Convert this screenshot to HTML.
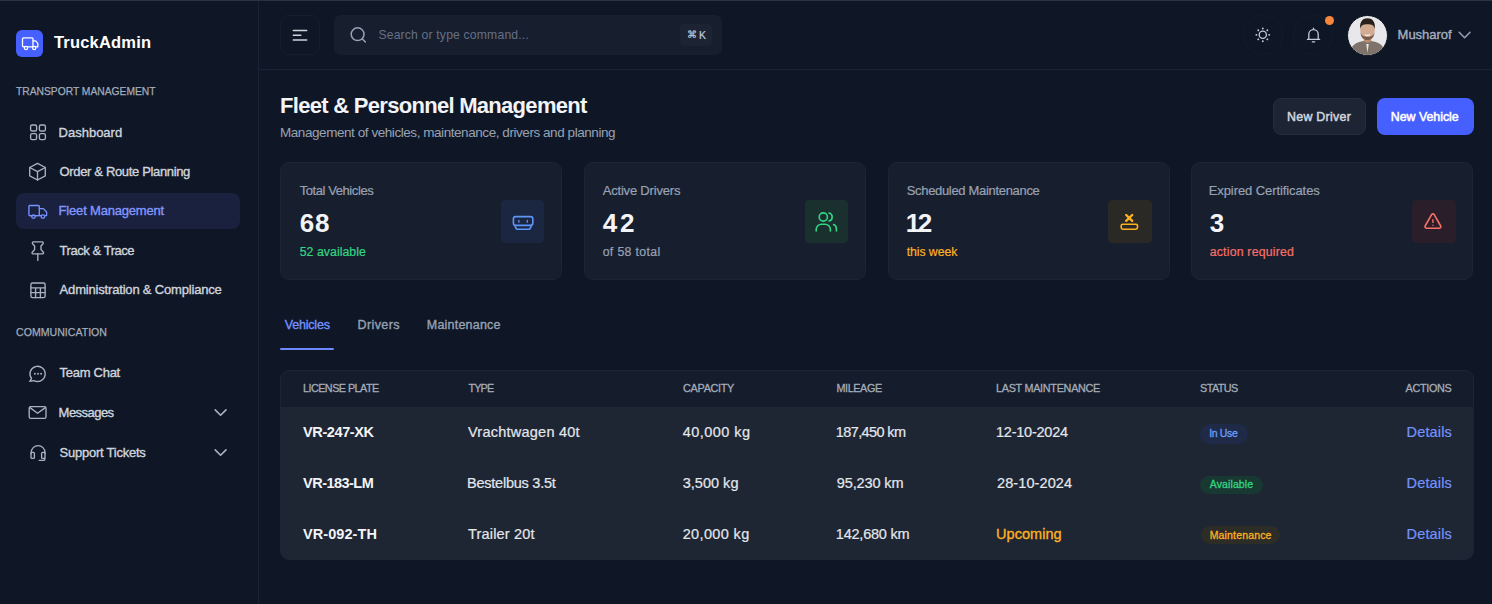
<!DOCTYPE html>
<html><head><meta charset="utf-8">
<style>
*{box-sizing:border-box;margin:0;padding:0}
html,body{width:1492px;height:604px;overflow:hidden;background:#0f1727;font-family:"Liberation Sans",sans-serif;color:#e4e7ec;position:relative}
.a{position:absolute}
.t{position:absolute;white-space:nowrap;line-height:1}
svg.ic{position:absolute;left:0;top:0;overflow:visible}
</style></head><body>
<!-- frame -->
<div class="a" style="left:0;top:0;width:1492px;height:1px;background:#2b3242"></div>
<div class="a" style="left:258px;top:1px;width:1px;height:603px;background:#1a2233"></div>
<div class="a" style="left:259px;top:69px;width:1233px;height:1px;background:#1a2233"></div>

<!-- logo -->
<div class="a" style="left:16px;top:29.5px;width:27px;height:27px;border-radius:6px;background:#465fff"></div>

<!-- sidebar active -->
<div class="a" style="left:16px;top:192.5px;width:224px;height:36.5px;border-radius:8px;background:#19213e"></div>

<!-- header controls -->
<div class="a" style="left:280px;top:14.5px;width:40px;height:40.5px;border:1px solid #161d2d;border-radius:8px"></div>
<div class="a" style="left:334px;top:14.5px;width:387.5px;height:40.5px;border-radius:7px;background:#171f2f"></div>
<div class="a" style="left:680px;top:24px;width:32px;height:22px;border-radius:4px;background:#1c2434"></div>
<div class="a" style="left:1243px;top:15px;width:40px;height:40px;border:1px solid #141b2b;border-radius:50%"></div>
<div class="a" style="left:1293px;top:15px;width:40px;height:40px;border:1px solid #141b2b;border-radius:50%"></div>
<div class="a" style="left:1324.5px;top:16px;width:9px;height:9px;border-radius:50%;background:#f7853a"></div>

<!-- avatar -->
<div class="a" style="left:1347px;top:15px;width:41px;height:41px;border-radius:50%;background:#e8e8ec;overflow:hidden;border:1px solid #0b101c">
 <svg width="41" height="41" viewBox="0 0 41 41" style="position:absolute;left:-1px;top:-1px">
  <path d="M2 41 C3 30 9 26.5 20.5 25.5 C32 26.5 38 30 39 41Z" fill="#7d736b"/>
  <path d="M16.8 21 L16.8 26.5 C18.5 28 22.5 28 24.2 26.5 L24.2 21Z" fill="#b88c72"/>
  <ellipse cx="20.5" cy="15" rx="7.3" ry="9" fill="#d3ab92"/>
  <path d="M13.1 14.5 C12.4 6 16 3.3 20.5 3.3 C25 3.3 28.6 6 27.9 14.5 C27.2 10.3 25 9.3 20.5 9.3 C16 9.3 13.8 10.3 13.1 14.5Z" fill="#2a201b"/>
  <path d="M13.4 17 C13.8 23 17 25 20.5 25 C24 25 27.2 23 27.6 17 C26.7 20.6 24.5 21.8 20.5 21.8 C16.5 21.8 14.3 20.6 13.4 17Z" fill="#7a5a4a"/>
  <path d="M17.9 19.6 Q20.5 21.4 23.1 19.6" stroke="#fff" stroke-width="1.1" fill="none"/>
  <path d="M19.3 29 L20.5 38 L21.7 29Z" fill="#efe9e2"/>
 </svg>
</div>

<!-- title buttons -->
<div class="a" style="left:1273px;top:98px;width:93px;height:37px;border-radius:8px;background:#1d2433;border:1px solid #252d3c"></div>
<div class="a" style="left:1377px;top:98px;width:96.5px;height:37px;border-radius:8px;background:#465fff"></div>

<!-- cards -->
<div class="a" style="left:280px;top:162px;width:282px;height:118px;border-radius:9px;background:#171f2f;border:1px solid #1c2435"></div>
<div class="a" style="left:584px;top:162px;width:282px;height:118px;border-radius:9px;background:#171f2f;border:1px solid #1c2435"></div>
<div class="a" style="left:887.5px;top:162px;width:282px;height:118px;border-radius:9px;background:#171f2f;border:1px solid #1c2435"></div>
<div class="a" style="left:1191px;top:162px;width:282px;height:118px;border-radius:9px;background:#171f2f;border:1px solid #1c2435"></div>
<div class="a" style="left:501px;top:200px;width:43px;height:43px;border-radius:4.5px;background:#1b2641"></div>
<div class="a" style="left:805px;top:200px;width:43px;height:43px;border-radius:4.5px;background:#19302f"></div>
<div class="a" style="left:1108px;top:200px;width:43.5px;height:43px;border-radius:4.5px;background:#2a2925"></div>
<div class="a" style="left:1412px;top:200px;width:43.5px;height:43px;border-radius:4.5px;background:#2a1e2b"></div>

<!-- tabs underline -->
<div class="a" style="left:280px;top:347.5px;width:54px;height:2.5px;border-radius:1px;background:#6f87ff"></div>

<!-- table -->
<div class="a" style="left:280px;top:370px;width:1194px;height:190px;border-radius:9px;background:#1e2634;border:1px solid #1c2435;overflow:hidden">
 <div class="a" style="left:0;top:0;width:1194px;height:36px;background:#151d2c"></div>
</div>
<div class="a" style="left:1200px;top:424px;width:47.5px;height:19.5px;border-radius:10px;background:#1e2a47"></div>
<div class="a" style="left:1200px;top:476px;width:62.5px;height:18px;border-radius:9px;background:#183832"></div>
<div class="a" style="left:1200.5px;top:526px;width:79.5px;height:18px;border-radius:9px;background:#2d2d27"></div>

<!-- icons -->
<svg class="ic" width="1492" height="604" fill="none" stroke-linecap="round" stroke-linejoin="round">
 <!-- logo truck -->
 <g stroke="#ffffff" stroke-width="1.3">
  <rect x="22.5" y="37.8" width="10.5" height="9" rx="1"/>
  <path d="M33 40.8H35.6L37.8 43.4V46.8H33"/>
  <circle cx="26" cy="48" r="1.6" fill="#465fff"/><circle cx="34.2" cy="48" r="1.6" fill="#465fff"/>
 </g>
 <!-- sidebar icons -->
 <g stroke="#aab2bf" stroke-width="1.35">
  <rect x="30.6" y="125" width="6" height="6" rx="1.6"/><rect x="39.4" y="125" width="6" height="6" rx="1.6"/>
  <rect x="30.6" y="133.6" width="6" height="6" rx="1.6"/><rect x="39.4" y="133.6" width="6" height="6" rx="1.6"/>
  <path d="M37.5 163.3L45.3 167.5V175.8L37.5 180L29.7 175.8V167.5Z"/>
  <path d="M29.7 167.5L37.5 171.7L45.3 167.5M37.5 171.7V180"/>
  <path d="M33.4 241.9H42.2A1.1 1.1 0 0 1 43 243.7L41 246V249.6L43.4 252.3A1 1 0 0 1 42.7 253.9H32.9A1 1 0 0 1 32.2 252.3L34.6 249.6V246L32.6 243.7A1.1 1.1 0 0 1 33.4 241.9Z"/><path d="M37.8 254V260.4"/>
  <rect x="30.9" y="283" width="14.2" height="14.6" rx="1.6"/>
  <path d="M30.9 287.8H45.1M30.9 292.6H45.1M35.6 287.8V297.6M40.4 287.8V297.6"/>
  <path d="M31.6 378.6A7.6 7.6 0 1 1 34 380.6L29.8 381.3Z"/>
  <rect x="29.2" y="406.6" width="16.8" height="11.8" rx="1.6"/>
  <path d="M29.9 407.6L37.6 413.2L45.3 407.6"/>
  <path d="M31.2 453.5V452.5A6.9 6.9 0 0 1 45 452.5V453.5"/>
  <rect x="31" y="452.4" width="3.4" height="6" rx="1"/><rect x="41.6" y="452.4" width="3.4" height="6" rx="1"/>
  <path d="M44.8 458.4V459.2A1.2 1.2 0 0 1 43.6 460.4H39.3"/>
  <path d="M215.2 409.9L220.6 415.3L226 409.9M215.2 449.9L220.6 455.3L226 449.9" stroke-width="1.6"/>
 </g>
 <g fill="#aab2bf"><circle cx="34.9" cy="373.8" r="0.95"/><circle cx="38" cy="373.8" r="0.95"/><circle cx="41.1" cy="373.8" r="0.95"/></g>
 <!-- fleet truck active -->
 <g stroke="#7592ff" stroke-width="1.35">
  <path d="M39.3 215.6H29.6A0.8 0.8 0 0 1 28.9 214.8V206.4A0.9 0.9 0 0 1 29.8 205.5H38.4A0.9 0.9 0 0 1 39.3 206.4V215.6"/>
  <path d="M39.3 208.6H43.4L46.6 212V215.6H45M40.9 215.6H36.4M31.5 215.6H29.6"/>
  <circle cx="33.5" cy="216.6" r="1.8"/><circle cx="42.9" cy="216.6" r="1.8"/>
 </g>
 <!-- header icons -->
 <g stroke="#d0d5dd" stroke-width="1.5">
  <path d="M293.3 30.5H306.7M293.3 35.2H300.8M293.3 40H306.7"/>
 </g>
 <g stroke="#98a2b3" stroke-width="1.5">
  <circle cx="357.6" cy="34.2" r="6.4"/><path d="M362.4 39L365.4 42"/>
 </g>
 <g stroke="#c4cad4" stroke-width="1.3">
  <circle cx="1262.8" cy="34.8" r="3.6"/>
  <path d="M1262.8 28.3V28.5M1262.8 41.1V41.3M1256.3 34.8H1256.5M1269.1 34.8H1269.3M1258.2 30.2L1258.3 30.3M1267.3 39.3L1267.4 39.4M1258.2 39.4L1258.3 39.3M1267.3 30.3L1267.4 30.2" stroke-width="1.8"/>
  <path d="M1307.4 39.4H1319.6M1308.8 39.4V34.2A4.7 4.7 0 0 1 1318.2 34.2V39.4M1313.5 28.2V29.4M1312.3 41.8H1314.7"/>
  <path d="M1459.2 32.3L1464.6 37.7L1470 32.3" stroke="#98a2b3" stroke-width="1.5"/>
 </g>
 <!-- card icons -->
 <g stroke="#5e95f8" stroke-width="1.6">
  <rect x="513.4" y="216.6" width="19.4" height="8.8" rx="2.2"/>
  <path d="M514.8 225.4L516 228.4A1.3 1.3 0 0 0 517.2 229.2H529A1.3 1.3 0 0 0 530.2 228.4L531.4 225.4"/>
  <path d="M518.9 220.4V222.2M527.3 220.4V222.2" stroke-width="1.3"/>
 </g>
 <g stroke="#32d583" stroke-width="1.6">
  <circle cx="823.3" cy="217" r="4.1"/>
  <path d="M816.2 231V229.5A5.3 5.3 0 0 1 821.5 224.2H825.1A5.3 5.3 0 0 1 830.4 229.5V231"/>
  <path d="M829 213A4.1 4.1 0 0 1 829 221"/>
  <path d="M833.6 224.6A4.5 4.5 0 0 1 836.4 228.8V231"/>
 </g>
 <g stroke="#fdb022">
  <path d="M1126.2 215L1132.2 220.8M1132.2 215L1126.2 220.8" stroke-width="2.4"/>
  <rect x="1121.2" y="224.2" width="16.3" height="5" rx="1.6" stroke-width="1.6"/>
 </g>
 <g stroke="#f97066" stroke-width="1.6">
  <path d="M1431.6 214.6A1.5 1.5 0 0 1 1434.2 214.6L1440.7 226A1.5 1.5 0 0 1 1439.4 228.2H1426.4A1.5 1.5 0 0 1 1425.1 226Z"/>
  <path d="M1432.9 219.6V222.4M1432.9 225.2V225.3" stroke-width="1.4"/>
 </g>
</svg>

<div class="t" style="left:54.00px;top:34.18px;font-size:16.5px;font-weight:700;color:#ffffff;letter-spacing:0.192px;">TruckAdmin</div>
<div class="t" style="left:15.80px;top:85.73px;font-size:11.8px;font-weight:400;color:#a4adbb;transform:scaleX(0.8710);transform-origin:0 0;-webkit-text-stroke:0.25px #a4adbb">TRANSPORT MANAGEMENT</div>
<div class="t" style="left:58.60px;top:125.54px;font-size:13px;font-weight:400;color:#d0d5dd;letter-spacing:-0.008px;-webkit-text-stroke:0.35px #d0d5dd">Dashboard</div>
<div class="t" style="left:59.60px;top:164.64px;font-size:13px;font-weight:400;color:#d0d5dd;letter-spacing:-0.347px;-webkit-text-stroke:0.35px #d0d5dd">Order &amp; Route Planning</div>
<div class="t" style="left:58.60px;top:204.24px;font-size:13px;font-weight:400;color:#8197ff;letter-spacing:-0.185px;-webkit-text-stroke:0.35px #8197ff">Fleet Management</div>
<div class="t" style="left:59.60px;top:243.94px;font-size:13px;font-weight:400;color:#d0d5dd;letter-spacing:-0.452px;-webkit-text-stroke:0.35px #d0d5dd">Track &amp; Trace</div>
<div class="t" style="left:59.60px;top:283.44px;font-size:13px;font-weight:400;color:#d0d5dd;letter-spacing:-0.180px;-webkit-text-stroke:0.35px #d0d5dd">Administration &amp; Compliance</div>
<div class="t" style="left:15.80px;top:326.53px;font-size:11.8px;font-weight:400;color:#a4adbb;transform:scaleX(0.8975);transform-origin:0 0;-webkit-text-stroke:0.25px #a4adbb">COMMUNICATION</div>
<div class="t" style="left:59.60px;top:365.74px;font-size:13px;font-weight:400;color:#d0d5dd;letter-spacing:-0.281px;-webkit-text-stroke:0.35px #d0d5dd">Team Chat</div>
<div class="t" style="left:58.60px;top:405.74px;font-size:13px;font-weight:400;color:#d0d5dd;letter-spacing:-0.536px;-webkit-text-stroke:0.35px #d0d5dd">Messages</div>
<div class="t" style="left:59.60px;top:445.74px;font-size:13px;font-weight:400;color:#d0d5dd;letter-spacing:-0.238px;-webkit-text-stroke:0.35px #d0d5dd">Support Tickets</div>
<div class="t" style="left:378.40px;top:28.96px;font-size:12.2px;font-weight:400;color:#667085;letter-spacing:0.170px;">Search or type command...</div>
<div class="t" style="left:686.80px;top:29.71px;font-size:10px;font-weight:400;color:#c4cad4;-webkit-text-stroke:0.2px #c4cad4">&#8984;</div>
<div class="t" style="left:699.00px;top:29.63px;font-size:10.5px;font-weight:400;color:#c4cad4;-webkit-text-stroke:0.2px #c4cad4">K</div>
<div class="t" style="left:1397.60px;top:27.94px;font-size:13px;font-weight:400;color:#a4adbb;letter-spacing:-0.025px;-webkit-text-stroke:0.4px #a4adbb">Musharof</div>
<div class="t" style="left:280.00px;top:95.01px;font-size:22px;font-weight:700;color:#f2f4f7;letter-spacing:-0.707px;">Fleet &amp; Personnel Management</div>
<div class="t" style="left:280.00px;top:126.46px;font-size:13.5px;font-weight:400;color:#98a2b3;letter-spacing:-0.441px;">Management of vehicles, maintenance, drivers and planning</div>
<div class="t" style="left:1287.00px;top:111.23px;font-size:12.4px;font-weight:400;color:#d0d5dd;letter-spacing:0.284px;-webkit-text-stroke:0.5px #d0d5dd">New Driver</div>
<div class="t" style="left:1390.80px;top:111.23px;font-size:12.4px;font-weight:400;color:#ffffff;letter-spacing:-0.029px;-webkit-text-stroke:0.5px #ffffff">New Vehicle</div>
<div class="t" style="left:299.70px;top:184.34px;font-size:13px;font-weight:400;color:#98a2b3;letter-spacing:-0.422px;-webkit-text-stroke:0.2px #98a2b3">Total Vehicles</div>
<div class="t" style="left:299.70px;top:209.67px;font-size:26px;font-weight:700;color:#f2f4f7;letter-spacing:0.940px;">68</div>
<div class="t" style="left:299.70px;top:246.05px;font-size:12.3px;font-weight:400;color:#32d583;letter-spacing:0.046px;-webkit-text-stroke:0.2px #32d583">52 available</div>
<div class="t" style="left:602.70px;top:184.34px;font-size:13px;font-weight:400;color:#98a2b3;letter-spacing:-0.191px;-webkit-text-stroke:0.2px #98a2b3">Active Drivers</div>
<div class="t" style="left:602.70px;top:209.67px;font-size:26px;font-weight:700;color:#f2f4f7;letter-spacing:2.840px;">42</div>
<div class="t" style="left:602.70px;top:246.05px;font-size:12.3px;font-weight:400;color:#98a2b3;letter-spacing:0.342px;-webkit-text-stroke:0.2px #98a2b3">of 58 total</div>
<div class="t" style="left:906.70px;top:184.34px;font-size:13px;font-weight:400;color:#98a2b3;letter-spacing:-0.318px;-webkit-text-stroke:0.2px #98a2b3">Scheduled Maintenance</div>
<div class="t" style="left:905.70px;top:209.67px;font-size:26px;font-weight:700;color:#f2f4f7;letter-spacing:-2.460px;">12</div>
<div class="t" style="left:906.70px;top:246.05px;font-size:12.3px;font-weight:400;color:#fdb022;letter-spacing:-0.076px;-webkit-text-stroke:0.2px #fdb022">this week</div>
<div class="t" style="left:1208.70px;top:184.34px;font-size:13px;font-weight:400;color:#98a2b3;letter-spacing:-0.085px;-webkit-text-stroke:0.2px #98a2b3">Expired Certificates</div>
<div class="t" style="left:1209.70px;top:209.67px;font-size:26px;font-weight:700;color:#f2f4f7;">3</div>
<div class="t" style="left:1209.70px;top:246.05px;font-size:12.3px;font-weight:400;color:#f97066;letter-spacing:0.207px;-webkit-text-stroke:0.2px #f97066">action required</div>
<div class="t" style="left:284.70px;top:319.22px;font-size:12.5px;font-weight:400;color:#7592ff;letter-spacing:-0.187px;-webkit-text-stroke:0.35px #7592ff">Vehicles</div>
<div class="t" style="left:357.60px;top:319.22px;font-size:12.5px;font-weight:400;color:#98a2b3;letter-spacing:0.378px;-webkit-text-stroke:0.35px #98a2b3">Drivers</div>
<div class="t" style="left:426.80px;top:319.22px;font-size:12.5px;font-weight:400;color:#98a2b3;letter-spacing:0.208px;-webkit-text-stroke:0.35px #98a2b3">Maintenance</div>
<div class="t" style="left:303.00px;top:383.29px;font-size:10.8px;font-weight:400;color:#a4acb9;letter-spacing:-0.534px;-webkit-text-stroke:0.3px #a4acb9">LICENSE PLATE</div>
<div class="t" style="left:468.40px;top:383.29px;font-size:10.8px;font-weight:400;color:#a4acb9;letter-spacing:-0.799px;-webkit-text-stroke:0.3px #a4acb9">TYPE</div>
<div class="t" style="left:683.10px;top:383.29px;font-size:10.8px;font-weight:400;color:#a4acb9;letter-spacing:-0.285px;-webkit-text-stroke:0.3px #a4acb9">CAPACITY</div>
<div class="t" style="left:836.40px;top:383.29px;font-size:10.8px;font-weight:400;color:#a4acb9;letter-spacing:-0.367px;-webkit-text-stroke:0.3px #a4acb9">MILEAGE</div>
<div class="t" style="left:996.00px;top:383.29px;font-size:10.8px;font-weight:400;color:#a4acb9;letter-spacing:-0.272px;-webkit-text-stroke:0.3px #a4acb9">LAST MAINTENANCE</div>
<div class="t" style="left:1200.10px;top:383.29px;font-size:10.8px;font-weight:400;color:#a4acb9;letter-spacing:-0.597px;-webkit-text-stroke:0.3px #a4acb9">STATUS</div>
<div class="t" style="left:1405.60px;top:383.29px;font-size:10.8px;font-weight:400;color:#a4acb9;letter-spacing:-0.315px;-webkit-text-stroke:0.3px #a4acb9">ACTIONS</div>
<div class="t" style="left:303.10px;top:424.70px;font-size:14.5px;font-weight:700;color:#f2f4f7;letter-spacing:-0.408px;">VR-247-XK</div>
<div class="t" style="left:468.00px;top:424.70px;font-size:14.5px;font-weight:400;color:#e4e7ec;letter-spacing:0.239px;-webkit-text-stroke:0.2px #e4e7ec">Vrachtwagen 40t</div>
<div class="t" style="left:682.70px;top:424.70px;font-size:14.5px;font-weight:400;color:#e4e7ec;letter-spacing:0.459px;-webkit-text-stroke:0.2px #e4e7ec">40,000 kg</div>
<div class="t" style="left:835.80px;top:424.70px;font-size:14.5px;font-weight:400;color:#e4e7ec;letter-spacing:-0.610px;-webkit-text-stroke:0.2px #e4e7ec">187,450 km</div>
<div class="t" style="left:996.00px;top:424.70px;font-size:14.5px;font-weight:400;color:#e4e7ec;letter-spacing:-0.234px;-webkit-text-stroke:0.2px #e4e7ec">12-10-2024</div>
<div class="t" style="left:1406.60px;top:424.70px;font-size:14.5px;font-weight:400;color:#7592ff;letter-spacing:0.138px;-webkit-text-stroke:0.2px #7592ff">Details</div>
<div class="t" style="left:303.10px;top:475.70px;font-size:14.5px;font-weight:700;color:#f2f4f7;letter-spacing:-0.531px;">VR-183-LM</div>
<div class="t" style="left:467.00px;top:475.70px;font-size:14.5px;font-weight:400;color:#e4e7ec;letter-spacing:-0.236px;-webkit-text-stroke:0.2px #e4e7ec">Bestelbus 3.5t</div>
<div class="t" style="left:682.70px;top:475.70px;font-size:14.5px;font-weight:400;color:#e4e7ec;letter-spacing:0.019px;-webkit-text-stroke:0.2px #e4e7ec">3,500 kg</div>
<div class="t" style="left:836.80px;top:475.70px;font-size:14.5px;font-weight:400;color:#e4e7ec;letter-spacing:-0.129px;-webkit-text-stroke:0.2px #e4e7ec">95,230 km</div>
<div class="t" style="left:997.00px;top:475.70px;font-size:14.5px;font-weight:400;color:#e4e7ec;letter-spacing:0.099px;-webkit-text-stroke:0.2px #e4e7ec">28-10-2024</div>
<div class="t" style="left:1406.60px;top:475.70px;font-size:14.5px;font-weight:400;color:#7592ff;letter-spacing:0.138px;-webkit-text-stroke:0.2px #7592ff">Details</div>
<div class="t" style="left:303.10px;top:526.50px;font-size:14.5px;font-weight:700;color:#f2f4f7;letter-spacing:0.056px;">VR-092-TH</div>
<div class="t" style="left:468.00px;top:526.50px;font-size:14.5px;font-weight:400;color:#e4e7ec;letter-spacing:0.180px;-webkit-text-stroke:0.2px #e4e7ec">Trailer 20t</div>
<div class="t" style="left:682.70px;top:526.50px;font-size:14.5px;font-weight:400;color:#e4e7ec;letter-spacing:0.359px;-webkit-text-stroke:0.2px #e4e7ec">20,000 kg</div>
<div class="t" style="left:835.80px;top:526.50px;font-size:14.5px;font-weight:400;color:#e4e7ec;letter-spacing:-0.221px;-webkit-text-stroke:0.2px #e4e7ec">142,680 km</div>
<div class="t" style="left:996.00px;top:526.50px;font-size:14.5px;font-weight:400;color:#fdb022;letter-spacing:0.055px;-webkit-text-stroke:0.35px #fdb022">Upcoming</div>
<div class="t" style="left:1406.60px;top:526.50px;font-size:14.5px;font-weight:400;color:#7592ff;letter-spacing:0.138px;-webkit-text-stroke:0.2px #7592ff">Details</div>
<div class="t" style="left:1209.20px;top:428.33px;font-size:10.5px;font-weight:400;color:#6c9ef8;letter-spacing:-0.361px;-webkit-text-stroke:0.3px #6c9ef8">In Use</div>
<div class="t" style="left:1209.70px;top:479.33px;font-size:10.5px;font-weight:400;color:#32d583;letter-spacing:0.127px;-webkit-text-stroke:0.3px #32d583">Available</div>
<div class="t" style="left:1209.70px;top:529.83px;font-size:10.5px;font-weight:400;color:#fdb022;letter-spacing:0.162px;-webkit-text-stroke:0.3px #fdb022">Maintenance</div>
</body></html>
